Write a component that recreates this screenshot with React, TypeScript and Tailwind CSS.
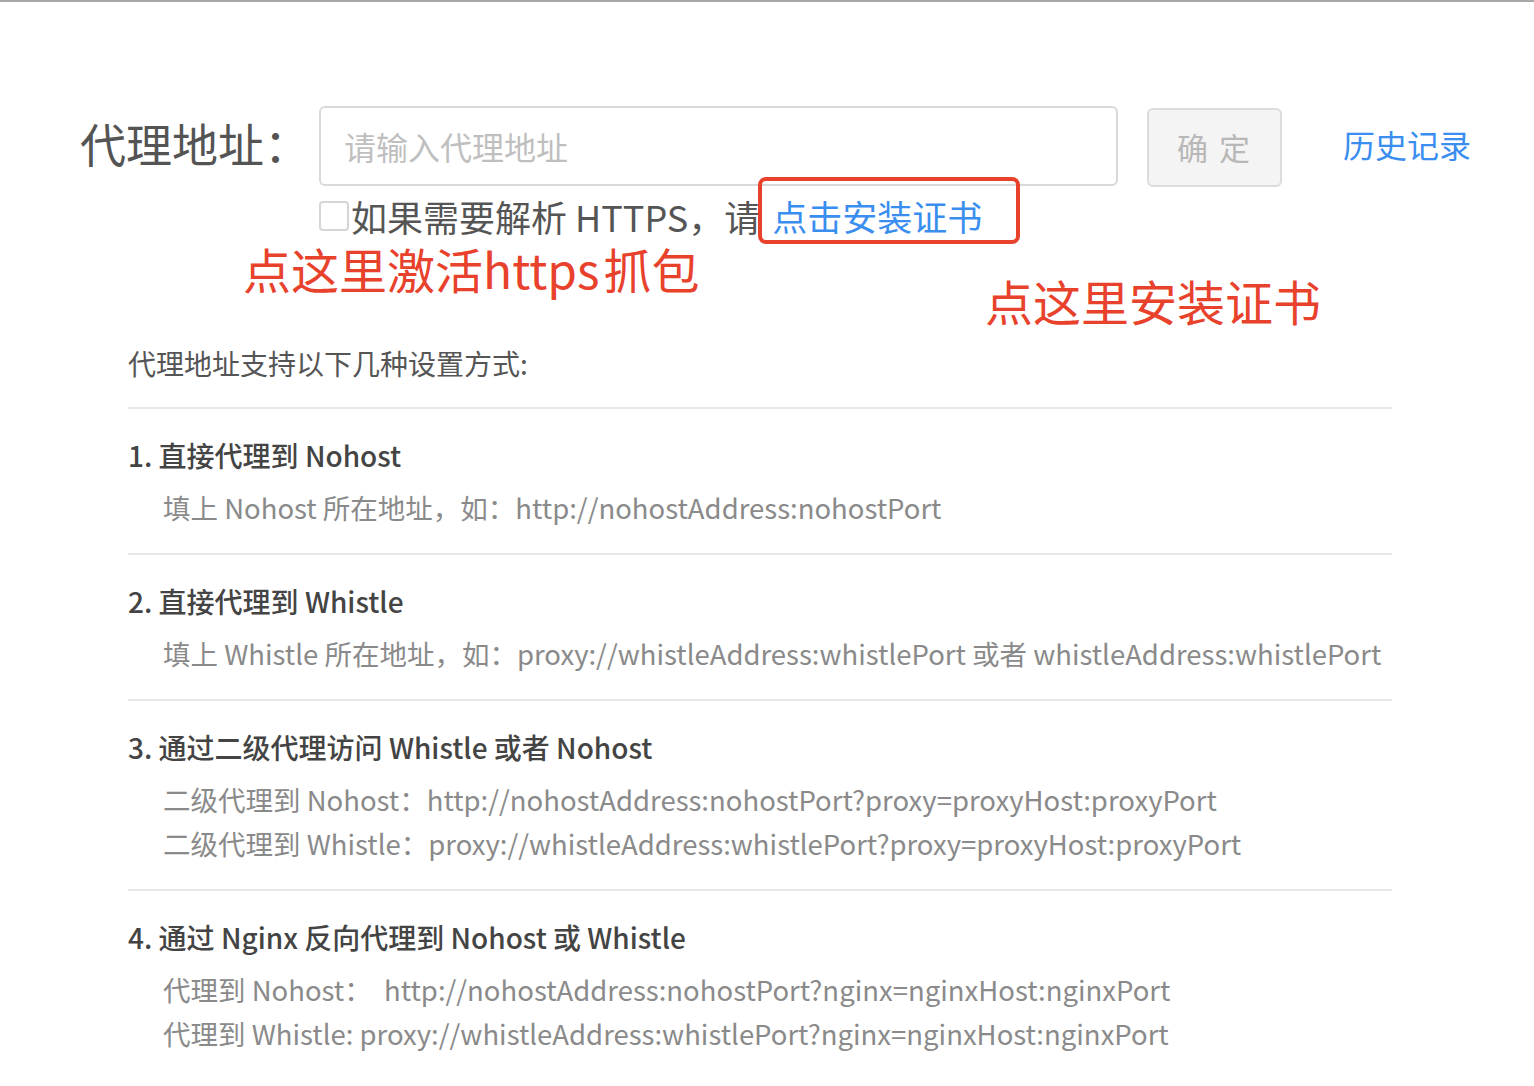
const font = { fontFamily: '"Noto Sans CJK SC", sans-serif' };

type Item = { title: string; lines: string[] };

const items: Item[] = [
    {
        title: '1. 直接代理到 Nohost',
        lines: ['填上 Nohost 所在地址，如：http://nohostAddress:nohostPort'],
    },
    {
        title: '2. 直接代理到 Whistle',
        lines: [
            '填上 Whistle 所在地址，如：proxy://whistleAddress:whistlePort 或者 whistleAddress:whistlePort',
        ],
    },
    {
        title: '3. 通过二级代理访问 Whistle 或者 Nohost',
        lines: [
            '二级代理到 Nohost：http://nohostAddress:nohostPort?proxy=proxyHost:proxyPort',
            '二级代理到 Whistle：proxy://whistleAddress:whistlePort?proxy=proxyHost:proxyPort',
        ],
    },
    {
        title: '4. 通过 Nginx 反向代理到 Nohost 或 Whistle',
        lines: [
            '代理到 Nohost：  http://nohostAddress:nohostPort?nginx=nginxHost:nginxPort',
            '代理到 Whistle: proxy://whistleAddress:whistlePort?nginx=nginxHost:nginxPort',
        ],
    },
];

export default function App() {
    return (
        <div
            className="min-h-screen border-t-2 border-[#a9a9a9] bg-white pl-[80px] pt-[102px]"
            style={font}
        >
            <div className="flex items-center">
                <div className="-mt-[8px] w-[239px] text-[46px] leading-[56px] text-[#545454]">
                    代理地址：
                </div>
                <input
                    placeholder="请输入代理地址"
                    className="h-[80px] w-[799px] rounded-[6px] border-2 border-[#d9d9d9] px-[23px] text-[32px] text-[#555] outline-none placeholder:text-[#bfbfbf]"
                />
                <button className="ml-[29px] mt-[4px] h-[79px] w-[135px] rounded-[6px] border-2 border-[#dcdcdc] bg-[#f4f4f4] text-[31px] tracking-[2px] text-[#b8b8b8]">
                    确 定
                </button>
                <a className="ml-[61px] -mt-[4px] text-[32px] text-[#3a8ef0]">历史记录</a>
            </div>

            <div className="ml-[239px] mt-[7px] flex items-center text-[36px] leading-[44px] text-[#555]">
                <span className="h-[30px] w-[30px] rounded-[4px] border-2 border-[#d6d6d6] bg-white" />
                <span className="ml-[2px]">如果需要解析 HTTPS，请</span>
                <span className="relative ml-[12px] text-[35px] text-[#3a8ef0]">
                    点击安装证书
                    <span className="absolute -bottom-[6px] -left-[14px] -right-[38px] -top-[17px] rounded-[8px] border-[4px] border-[#e8412c]" />
                </span>
            </div>

            <div className="mt-[2px] flex items-start text-[48px] leading-[56px] text-[#e8412c]">
                <span className="ml-[163px] w-[742px]">
                    点这里激活https<span className="ml-[4px]">抓包</span>
                </span>
                <span className="mt-[32px]">点这里安装证书</span>
            </div>

            <div className="ml-[48px] mt-[13px] w-[1264px] text-[28px] leading-[44px]">
                <div className="mb-[22px] text-[#555]">代理地址支持以下几种设置方式:</div>
                {items.map((it) => (
                    <div key={it.title} className="border-t-2 border-[#e8e8e8] pb-[24px] pt-[24px]">
                        <div className="font-medium text-[#444]">{it.title}</div>
                        <div className="mt-[8px] pl-[35px] text-[27.5px] text-[#8a8a8a]">
                            {it.lines.map((l) => (
                                <div key={l} className="whitespace-pre">
                                    {l}
                                </div>
                            ))}
                        </div>
                    </div>
                ))}
            </div>
        </div>
    );
}
